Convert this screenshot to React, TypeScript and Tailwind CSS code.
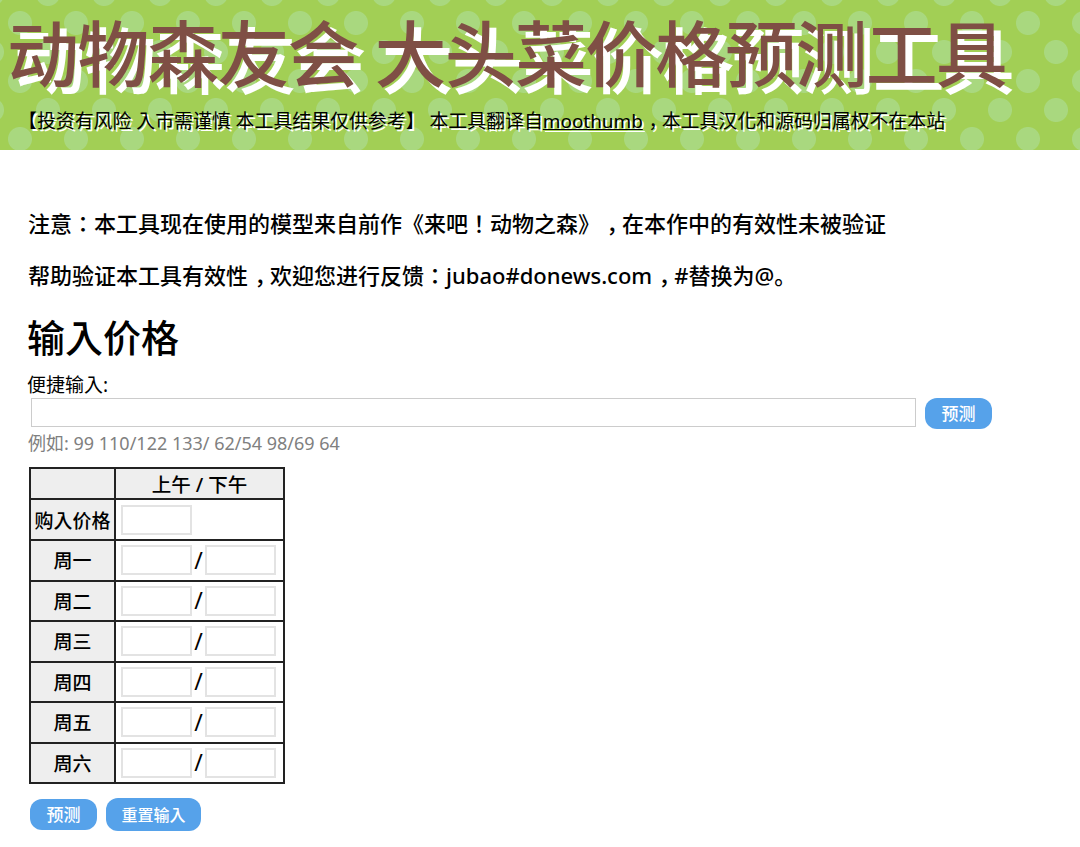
const font = "font-['Noto_Sans','Noto_Sans_CJK_TC',sans-serif] [text-spacing-trim:space-all]";
const scFont = "font-['Noto_Sans','Noto_Sans_CJK_SC',sans-serif]";

const days = ['周一', '周二', '周三', '周四', '周五', '周六'];

// comma sits low in the middle of its cell, neither the SC nor the TC glyph does that on its own
const Comma = () => <span className={`${scFont} pl-[0.3em] tracking-[-0.3em]`}>，</span>;

const PriceInput = () => (
  <input type="text" className="w-[71px] h-[30px] border-2 border-[#e3e3e3] bg-white outline-none align-middle" />
);

const Button = ({ label, className }: { label: string; className: string }) => (
  <button className={`bg-[#56a2ea] text-white leading-none font-medium rounded-[12px] ${className}`}>{label}</button>
);

export default function App() {
  return (
    <div className={`${font} min-h-[847px] bg-white text-black`}>
      {/* Header */}
      <header className="h-[150px] overflow-hidden bg-[#a2cf55] bg-[radial-gradient(circle,#a9d87f_11.5px,transparent_12.5px),radial-gradient(circle,#a9d87f_11.5px,transparent_12.5px)] bg-[length:56px_58px] bg-[position:-8px_-6px,20px_23px] pl-[7px]">
        <h1 className="h-[99px] pt-[10px] text-[72px] leading-[86px] font-medium tracking-[-1.85px] whitespace-nowrap text-[#7f4f45] [text-shadow:7px_7px_0_#fff]">
          动物森友会 大头菜价格预测工具
        </h1>
        <p className="pl-[11px] text-[18.9px] leading-[44px] whitespace-nowrap [text-shadow:2px_2px_0_#fff]">
          【投资有风险 入市需谨慎 本工具结果仅供参考】 本工具翻译自<u>moothumb</u><Comma />本工具汉化和源码归属权不在本站
        </p>
      </header>

      <main className="px-[28px]">
        <p className="pt-[55px] text-[22px] leading-[36px] font-medium whitespace-nowrap">
          注意：本工具现在使用的模型来自前作《来吧！动物之森》<Comma />在本作中的有效性未被验证
        </p>
        <p className="pt-[16px] text-[22px] leading-[36px] font-medium whitespace-nowrap">
          帮助验证本工具有效性<Comma />欢迎您进行反馈：jubao#donews.com<Comma />#替换为@<span className={scFont}>。</span>
        </p>
        <h2 className="pt-[16px] -ml-px text-[38px] leading-[56px] font-medium">输入价格</h2>

        <div className="pt-[7px] -ml-px text-[19px] leading-[26px]">便捷输入:</div>
        <div className="flex items-start pl-[3px] gap-[9px]">
          <input type="text" className="w-[885px] h-[29px] border border-[#cccccc] bg-white outline-none" />
          <Button label="预测" className="w-[67px] h-[31px] text-[17px]" />
        </div>
        <div className="pt-[1px] text-[18px] leading-[26px] text-[#808080]">例如: 99 110/122 133/ 62/54 98/69 64</div>

        {/* Price table */}
        <table className="mt-[11px] ml-[1px] w-[256px] border-collapse border-2 border-[#222222] text-[19px]">
          <tbody>
            <tr className="h-[31px]">
              <th className="w-[85px] border-2 border-[#222222] bg-[#eeeeee]"></th>
              <th className="border-2 border-[#222222] bg-[#eeeeee] pt-[3px] text-[19.5px] font-medium leading-none">上午 / 下午</th>
            </tr>
            <tr className="h-[41px]">
              <th className="border-2 border-[#222222] bg-[#eeeeee] p-0 pt-[3px] font-medium leading-none">购入价格</th>
              <td className="border-2 border-[#222222] pl-[5px]"><PriceInput /></td>
            </tr>
            {days.map((day) => (
              <tr key={day} className="h-[40.5px]">
                <th className="border-2 border-[#222222] bg-[#eeeeee] pt-[3px] font-medium leading-none">{day}</th>
                <td className="border-2 border-[#222222] pl-[5px] leading-none whitespace-nowrap">
                  <PriceInput />
                  <span className="inline-block w-[13px] text-center align-middle text-[23px]">/</span>
                  <PriceInput />
                </td>
              </tr>
            ))}
          </tbody>
        </table>

        <div className="flex items-center gap-[9px] pt-[14px] pl-[2px]">
          <Button label="预测" className="w-[67px] h-[31px] text-[17px]" />
          <Button label="重置输入" className="w-[95px] h-[33px] text-[16px]" />
        </div>
      </main>
    </div>
  );
}
